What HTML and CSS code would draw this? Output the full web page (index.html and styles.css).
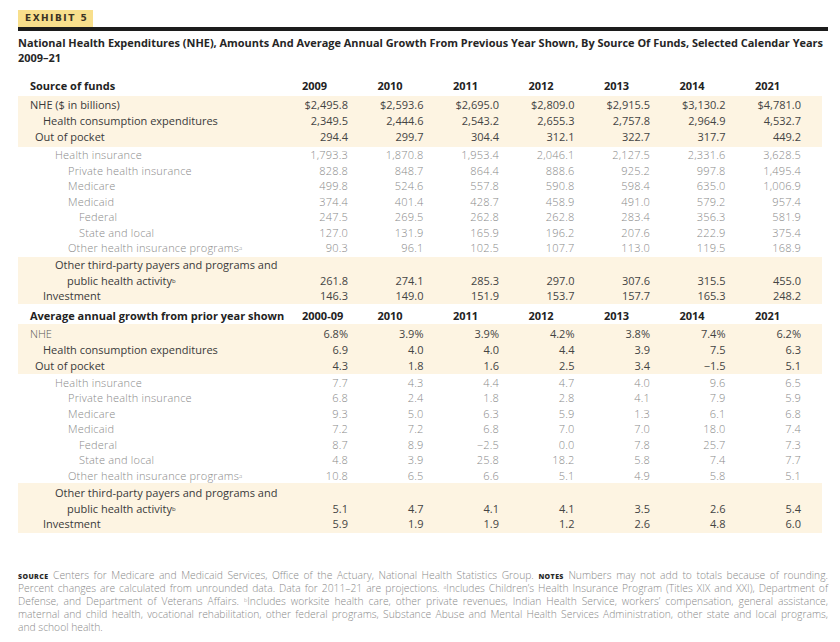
FILE: index.html
```html
<!DOCTYPE html>
<html>
<head>
<meta charset="utf-8">
<link rel="stylesheet" href="styles.css">
</head>
<body>
<div class="page">
  <div class="badge">EXHIBIT 5</div>
  <div class="rule"></div>
  <h1 class="title">National Health Expenditures (NHE), Amounts And Average Annual Growth From Previous Year Shown, By Source Of Funds, Selected Calendar Years 2009–21</h1>

  <table class="nhe">
    <colgroup>
      <col class="c-label"><col class="c-yr"><col class="c-yr"><col class="c-yr"><col class="c-yr"><col class="c-yr"><col class="c-yr"><col class="c-last">
    </colgroup>
    <tbody>
      <tr class="hdr hdr1">
        <th class="lab">Source of funds</th><th>2009</th><th>2010</th><th>2011</th><th>2012</th><th>2013</th><th>2014</th><th>2021</th>
      </tr>
    </tbody>
    <tbody class="band b1">
      <tr class="heavy"><td class="lab i1">NHE ($ in billions)</td><td>$2,495.8</td><td>$2,593.6</td><td>$2,695.0</td><td>$2,809.0</td><td>$2,915.5</td><td>$3,130.2</td><td>$4,781.0</td></tr>
      <tr class="heavy"><td class="lab i2">Health consumption expenditures</td><td>2,349.5</td><td>2,444.6</td><td>2,543.2</td><td>2,655.3</td><td>2,757.8</td><td>2,964.9</td><td>4,532.7</td></tr>
      <tr class="heavy last"><td class="lab i2b">Out of pocket</td><td>294.4</td><td>299.7</td><td>304.4</td><td>312.1</td><td>322.7</td><td>317.7</td><td>449.2</td></tr>
    </tbody>
    <tbody class="light g1">
      <tr><td class="lab i3">Health insurance</td><td>1,793.3</td><td>1,870.8</td><td>1,953.4</td><td>2,046.1</td><td>2,127.5</td><td>2,331.6</td><td>3,628.5</td></tr>
      <tr><td class="lab i4">Private health insurance</td><td>828.8</td><td>848.7</td><td>864.4</td><td>888.6</td><td>925.2</td><td>997.8</td><td>1,495.4</td></tr>
      <tr><td class="lab i4">Medicare</td><td>499.8</td><td>524.6</td><td>557.8</td><td>590.8</td><td>598.4</td><td>635.0</td><td>1,006.9</td></tr>
      <tr><td class="lab i4">Medicaid</td><td>374.4</td><td>401.4</td><td>428.7</td><td>458.9</td><td>491.0</td><td>579.2</td><td>957.4</td></tr>
      <tr><td class="lab i5">Federal</td><td>247.5</td><td>269.5</td><td>262.8</td><td>262.8</td><td>283.4</td><td>356.3</td><td>581.9</td></tr>
      <tr><td class="lab i5">State and local</td><td>127.0</td><td>131.9</td><td>165.9</td><td>196.2</td><td>207.6</td><td>222.9</td><td>375.4</td></tr>
      <tr class="last"><td class="lab i4">Other health insurance programs<sup>a</sup></td><td>90.3</td><td>96.1</td><td>102.5</td><td>107.7</td><td>113.0</td><td>119.5</td><td>168.9</td></tr>
    </tbody>
    <tbody class="band b2">
      <tr class="heavy"><td class="lab hang"><span class="l1">Other third-party payers and programs and</span><span class="l2">public health activity<sup>b</sup></span></td><td>261.8</td><td>274.1</td><td>285.3</td><td>297.0</td><td>307.6</td><td>315.5</td><td>455.0</td></tr>
      <tr class="heavy"><td class="lab i2">Investment</td><td>146.3</td><td>149.0</td><td>151.9</td><td>153.7</td><td>157.7</td><td>165.3</td><td>248.2</td></tr>
    </tbody>
    <tbody>
      <tr class="hdr hdr2">
        <th class="lab">Average annual growth from prior year shown</th><th>2000-09</th><th>2010</th><th>2011</th><th>2012</th><th>2013</th><th>2014</th><th>2021</th>
      </tr>
    </tbody>
    <tbody class="band b3">
      <tr class="heavy pct"><td class="lab i1 lt">NHE</td><td>6.8%</td><td>3.9%</td><td>3.9%</td><td>4.2%</td><td>3.8%</td><td>7.4%</td><td>6.2%</td></tr>
      <tr class="heavy"><td class="lab i2">Health consumption expenditures</td><td>6.9</td><td>4.0</td><td>4.0</td><td>4.4</td><td>3.9</td><td>7.5</td><td>6.3</td></tr>
      <tr class="heavy last"><td class="lab i2b">Out of pocket</td><td>4.3</td><td>1.8</td><td>1.6</td><td>2.5</td><td>3.4</td><td>−1.5</td><td>5.1</td></tr>
    </tbody>
    <tbody class="light g2">
      <tr><td class="lab i3">Health insurance</td><td>7.7</td><td>4.3</td><td>4.4</td><td>4.7</td><td>4.0</td><td>9.6</td><td>6.5</td></tr>
      <tr><td class="lab i4">Private health insurance</td><td>6.8</td><td>2.4</td><td>1.8</td><td>2.8</td><td>4.1</td><td>7.9</td><td>5.9</td></tr>
      <tr><td class="lab i4">Medicare</td><td>9.3</td><td>5.0</td><td>6.3</td><td>5.9</td><td>1.3</td><td>6.1</td><td>6.8</td></tr>
      <tr><td class="lab i4">Medicaid</td><td>7.2</td><td>7.2</td><td>6.8</td><td>7.0</td><td>7.0</td><td>18.0</td><td>7.4</td></tr>
      <tr><td class="lab i5">Federal</td><td>8.7</td><td>8.9</td><td>−2.5</td><td>0.0</td><td>7.8</td><td>25.7</td><td>7.3</td></tr>
      <tr><td class="lab i5">State and local</td><td>4.8</td><td>3.9</td><td>25.8</td><td>18.2</td><td>5.8</td><td>7.4</td><td>7.7</td></tr>
      <tr class="last"><td class="lab i4">Other health insurance programs<sup>a</sup></td><td>10.8</td><td>6.5</td><td>6.6</td><td>5.1</td><td>4.9</td><td>5.8</td><td>5.1</td></tr>
    </tbody>
    <tbody class="band b4">
      <tr class="heavy"><td class="lab hang"><span class="l1">Other third-party payers and programs and</span><span class="l2">public health activity<sup>b</sup></span></td><td>5.1</td><td>4.7</td><td>4.1</td><td>4.1</td><td>3.5</td><td>2.6</td><td>5.4</td></tr>
      <tr class="heavy"><td class="lab i2">Investment</td><td>5.9</td><td>1.9</td><td>1.9</td><td>1.2</td><td>2.6</td><td>4.8</td><td>6.0</td></tr>
    </tbody>
  </table>

  <div class="notes">
    <span class="ln"><b class="sc">source</b> Centers for Medicare and Medicaid Services, Office of the Actuary, National Health Statistics Group. <b class="sc">notes</b> Numbers may not add to totals because of rounding.</span>
    <span class="ln">Percent changes are calculated from unrounded data. Data for 2011–21 are projections. <sup>a</sup>Includes Children’s Health Insurance Program (Titles XIX and XXI), Department of</span>
    <span class="ln">Defense, and Department of Veterans Affairs. <sup>b</sup>Includes worksite health care, other private revenues, Indian Health Service, workers’ compensation, general assistance,</span>
    <span class="ln">maternal and child health, vocational rehabilitation, other federal programs, Substance Abuse and Mental Health Services Administration, other state and local programs,</span>
    <span class="ln end">and school health.</span>
  </div>
</div>
</body>
</html>
```

FILE: styles.css
```css
html, body {
  margin: 0;
  padding: 0;
  background: #ffffff;
}

body {
  font-family: "Open Sans", "Noto Sans", "Liberation Sans", sans-serif;
  color: #333;
}

.page {
  width: 810px;
  padding: 10px 12px 0 18px;
}

.badge {
  display: block;
  width: fit-content;
  background: #f8df8c;
  color: #3a3325;
  font-family: "DejaVu Sans", "Liberation Sans", sans-serif;
  font-weight: 700;
  font-size: 9px;
  letter-spacing: 1.5px;
  line-height: 17px;
  height: 17px;
  padding: 0 5px 0 7px;
}

.rule {
  height: 4px;
  background: #1c1c1c;
}

.title {
  margin: 5px 0 0 0;
  font-size: 10.95px;
  line-height: 14.5px;
  font-weight: 700;
  color: #262626;
}

/* ---------- table ---------- */
.nhe {
  margin-top: 12px;
  width: 804px;
  table-layout: fixed;
  border-collapse: collapse;
  font-size: 11px;
}

.c-label { width: 284px; }
.c-yr { width: 75.5px; }
.c-last { width: 67px; }

.nhe th,
.nhe td {
  padding: 0;
  white-space: nowrap;
  vertical-align: bottom;
}

.nhe th {
  text-align: left;
  font-weight: 700;
  color: #222;
  font-size: 11px;
}

.nhe td {
  text-align: right;
  padding-right: 29.5px;
}

.nhe td:last-child { padding-right: 21px; }

.nhe .lab {
  text-align: left;
  padding-right: 0;
}

.hdr1 th { height: 17px; line-height: 17px; padding-bottom: 2px; vertical-align: top; }
.hdr2 th { height: 16px; line-height: 16px; padding-top: 4px; padding-bottom: 0; vertical-align: top; }

.band { background: #fdf4e2; }

.heavy td {
  color: #3a3a3a;
  font-weight: 500;
  line-height: 16px;
}
.heavy td:not(.lab) { font-weight: 400; color: #444; }

.b1 tr:first-child td { padding-top: 1px; }
.b1 tr.last td { padding-bottom: 2px; }
.b3 tr:first-child td { padding-top: 2px; }

.light td {
  color: #8a8a8a;
  font-weight: 300;
  line-height: 15.5px;
  letter-spacing: 0.2px;
}
.g1 tr.last td { padding-bottom: 1.5px; }
.g2 tr:first-child td { padding-top: 1px; }

.b2 td, .b4 td { line-height: 15.5px; }
.b4 tr:first-child td { padding-top: 2px; }
.b4 tr:last-child td { padding-bottom: 1px; }

.nhe .lab.i1 { padding-left: 12px; }
.nhe .lab.i2 { padding-left: 25px; }
.nhe .lab.i2b { padding-left: 17px; }
.nhe .lab.i3 { padding-left: 37px; }
.nhe .lab.i4 { padding-left: 50px; }
.nhe .lab.i5 { padding-left: 61px; }
.nhe .lab.hang { padding-left: 37px; }
.lab.hang .l1,
.lab.hang .l2 { display: block; }
.lab.hang .l2 { padding-left: 12px; }
.nhe .lab.lt { font-weight: 300; color: #555; }

.nhe th.lab { padding-left: 12px; }

sup {
  font-size: 6px;
  line-height: 0;
  vertical-align: 2px;
}

/* ---------- notes ---------- */
.notes {
  margin-top: 36px;
  font-size: 10.3px;
  line-height: 13px;
  color: #8a8a8a;
  font-weight: 300;
}

.notes .ln {
  display: block;
  text-align: justify;
  text-align-last: justify;
}
.notes .ln.end { text-align-last: left; }

.notes .sc {
  font-variant: small-caps;
  text-transform: lowercase;
  font-weight: 800;
  color: #2a2a2a;
  letter-spacing: 0.4px;
}

.notes sup {
  font-size: 5.5px;
  vertical-align: 3px;
}
```
